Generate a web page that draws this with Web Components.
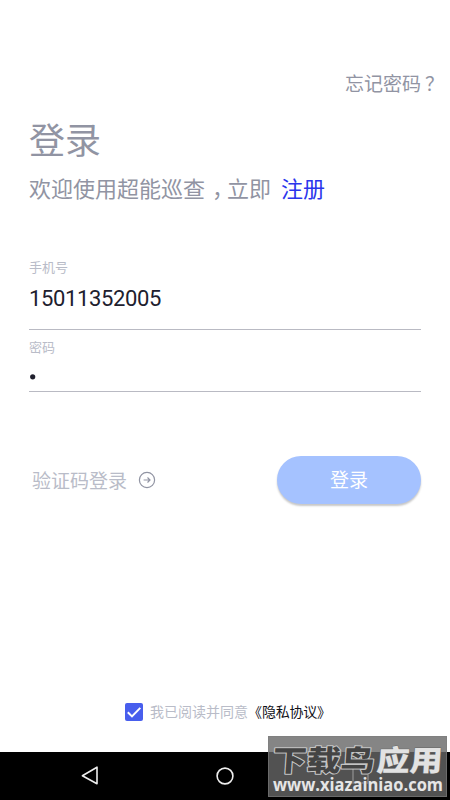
<!DOCTYPE html>
<html lang="zh-CN">
<head>
<meta charset="utf-8">
<title>登录</title>
<style>
html,body{margin:0;height:100%;background:#fff}
body{font-family:Roboto,"Noto Sans CJK SC",sans-serif;overflow:hidden}
</style>
</head>
<body>
<login-screen></login-screen>
<script>
const define = (name, html) => customElements.define(name, class extends HTMLElement {
  constructor() {
    super();
    this.attachShadow({mode: 'open'}).innerHTML = html;
  }
});

define('screen-heading', `<style>
:host{display:block;color:#9194a3}
h1{margin:0;font-size:36px;line-height:48px;font-weight:400}
p{margin:8px 0 0;font-size:22px;line-height:32px;display:flex;gap:10px;white-space:nowrap}
i{font-style:normal;font-feature-settings:"halt" 1;padding:0 4px 0 7px}
::slotted(a){color:#2b35ec}
</style><h1>登录</h1><p><span>欢迎使用超能巡查<i>，</i>立即</span><slot></slot></p>`);

define('text-field', `<style>
:host{display:flex;flex-direction:column;box-sizing:border-box;border-bottom:1px solid #b9bac3;color:#20202e}
label{font-size:13px;line-height:18px;color:#b9bcc8}
.v{font-size:22px;line-height:30px;letter-spacing:-.36px}
</style><label><slot name="label"></slot></label><div class="v"><slot></slot></div>`);

define('password-dot', `<style>
:host{display:block;height:30px}
svg{display:block}
</style><svg width="10" height="30"><circle cx="3.7" cy="19.8" r="2.6" fill="#20202e"/></svg>`);

define('code-login', `<style>
:host{display:flex;align-items:center;gap:11px;font-size:19px;line-height:28px;color:#b9bcc8;white-space:nowrap}
svg{display:block;margin-top:-4px}
</style><slot></slot><svg width="18" height="18" viewBox="0 0 18 18" fill="none" stroke="#9194a3" stroke-width="1.2"><circle cx="9" cy="9" r="7.6"/><path d="M5.6 9h6.4M9.5 6.5 12 9l-2.5 2.5"/></svg>`);

define('pill-button', `<style>
:host{display:block}
button{display:block;width:144px;height:48px;padding:0;border:0;border-radius:24px;background:#a5c2ff;color:#fff;font:400 19px/50px Roboto,"Noto Sans CJK SC",sans-serif;box-shadow:0 2px 2px rgba(0,0,0,.22)}
</style><button><slot></slot></button>`);

define('agree-row', `<style>
:host{display:flex;justify-content:center;align-items:center;font-size:14px;line-height:20px;color:#b9bcc8;white-space:nowrap}
svg{display:block;margin-right:7px}
::slotted(b){font-weight:400;color:#111119;letter-spacing:-.2px}
</style><svg width="18" height="18"><rect width="18" height="18" rx="2" fill="#485eed"/><path d="m2.8 9.2 4.2 4.2 8.3-8.5" fill="none" stroke="#fff" stroke-width="2"/></svg><slot></slot>`);

define('nav-bar', `<style>
:host{display:block;height:48px;background:#000}
svg{display:block}
</style><svg width="450" height="48" fill="none" stroke="#eee" stroke-width="1.6"><path d="M97 15.2v16.6L82.4 23.8Z" stroke-linejoin="round"/><circle cx="225" cy="24" r="7.9"/><path d="M353 16h15v15h-15z"/></svg>`);

define('site-mark', `<style>
:host{display:block;width:179px;height:61px;box-sizing:border-box;background:rgba(102,102,102,.8);border:1px solid rgba(125,125,125,.6)}
svg{display:block;margin:-1px;overflow:visible}
text{paint-order:stroke;stroke-linejoin:round}
.t{font:900 29px "Noto Sans CJK SC",sans-serif}
.u{font:700 17px "Open Sans","Noto Sans",sans-serif}
</style><svg width="179" height="61">
<g class="t" transform="translate(4 35) skewX(-4)"><text textLength="102" lengthAdjust="spacingAndGlyphs" fill="#444" stroke="#c4c4c4" stroke-width="2">下载鸟</text><text x="104" textLength="66" lengthAdjust="spacingAndGlyphs" fill="#e2e2e2" stroke="#666" stroke-width="1">应用</text></g>
<text class="u" x="5" y="55" textLength="170" lengthAdjust="spacingAndGlyphs" fill="#e6e6e6" stroke="#555" stroke-width="1">www.xiazainiao.com</text></svg>`);

define('login-screen', `<style>
:host{display:flex;flex-direction:column;position:relative;width:450px;height:800px;background:#fff}
.top{display:flex;justify-content:flex-end;padding:71px 6px 0 0;font-size:19px;line-height:28px;color:#9194a3;white-space:nowrap}
.top i{font-style:normal;padding-left:4px}
main{display:flex;flex-direction:column;padding:19px 29px 0}
.phone{margin-top:53px;height:71px}
.phone .n{display:block;padding-top:7px}
.pass{margin-top:9px;height:53px}
.actions{display:flex;justify-content:space-between;align-items:center;margin-top:64px;padding-left:3px}
.actions code-login{padding-top:4px}
agree-row{margin-top:auto;margin-bottom:30px;padding-left:6px}
site-mark{position:absolute;left:268px;top:736px}
</style>
<div class="top"><span>忘记密码<i>？</i></span></div>
<main>
<screen-heading><a>注册</a></screen-heading>
<text-field class="phone"><span slot="label">手机号</span><span class="n">15011352005</span></text-field>
<text-field class="pass"><span slot="label">密码</span><password-dot></password-dot></text-field>
<div class="actions"><code-login>验证码登录</code-login><pill-button>登录</pill-button></div>
</main>
<agree-row>我已阅读并同意<b>《隐私协议》</b></agree-row>
<nav-bar></nav-bar>
<site-mark></site-mark>`);
</script>
</body>
</html>
